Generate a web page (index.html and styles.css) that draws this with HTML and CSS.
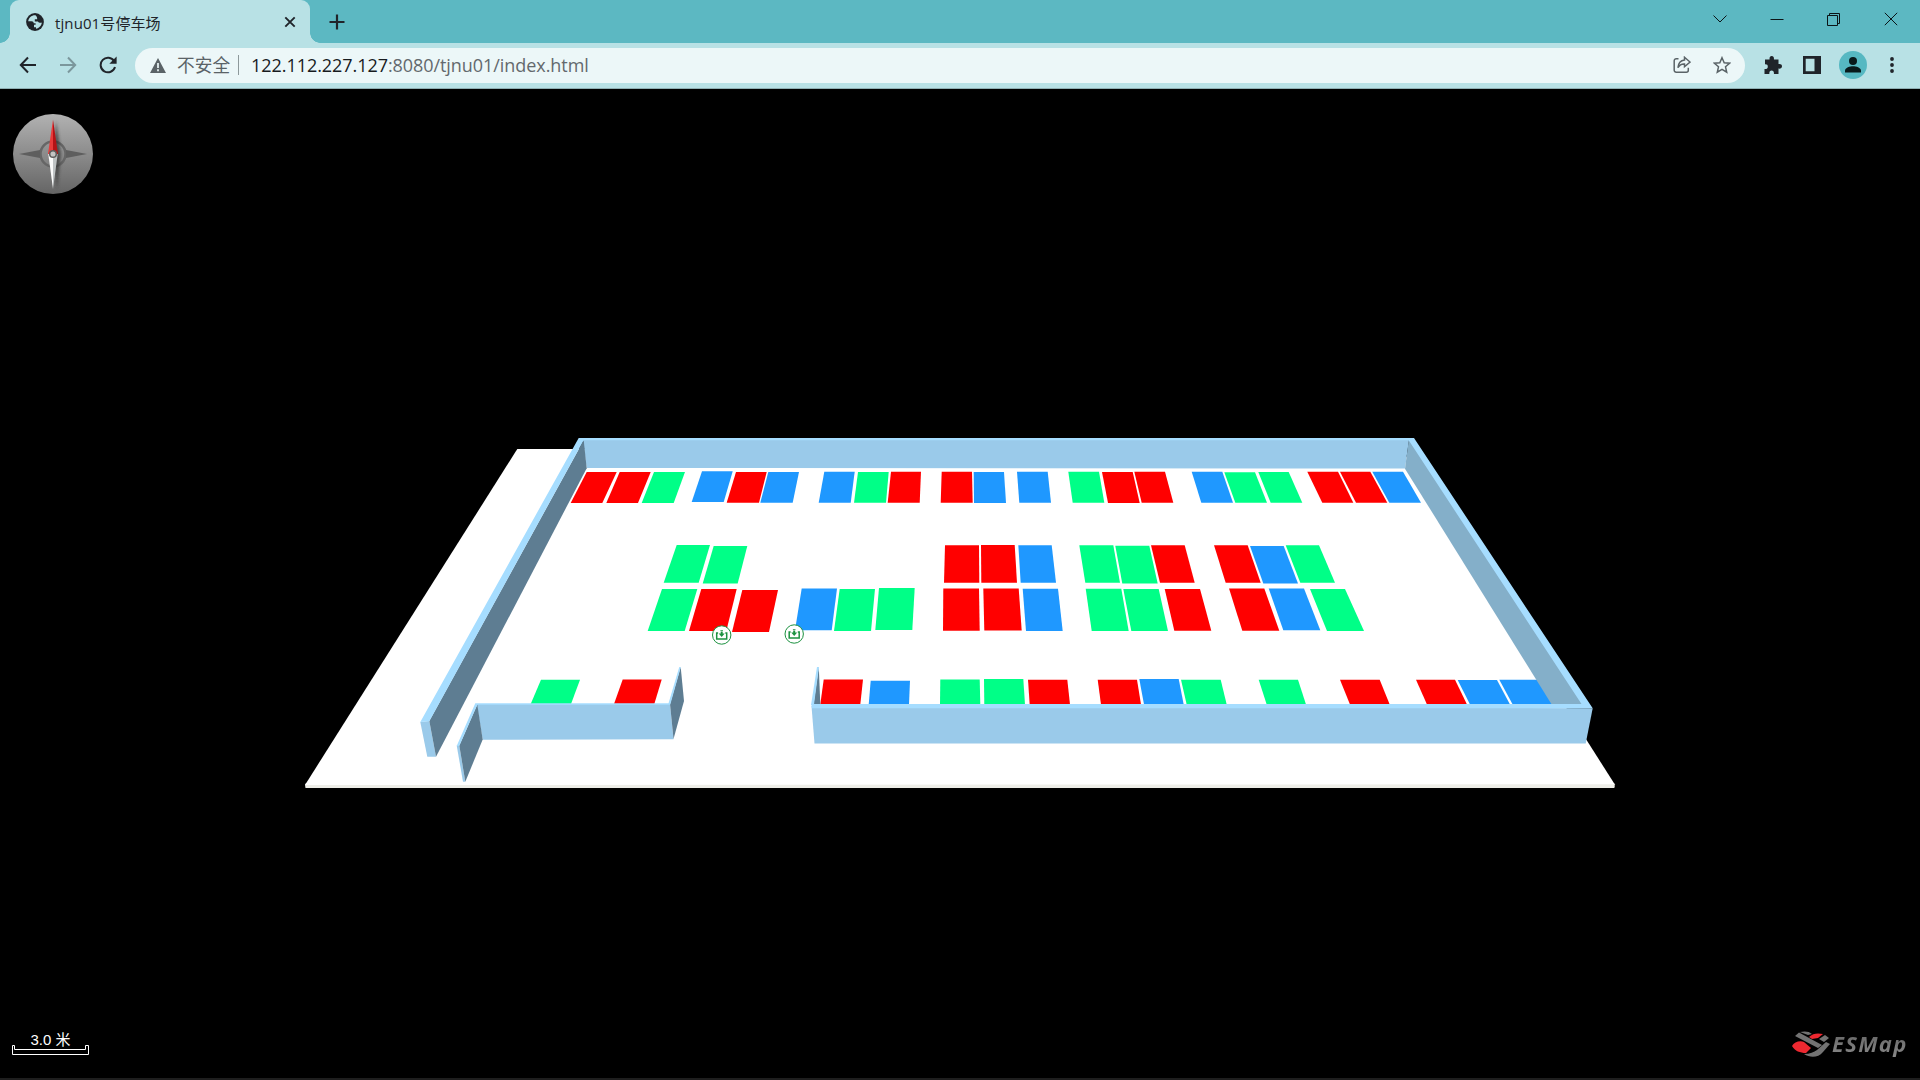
FILE: index.html
```html
<!DOCTYPE html>
<html lang="zh-CN">
<head>
<meta charset="utf-8">
<title>tjnu01号停车场</title>
<link rel="stylesheet" href="styles.css">
</head>
<body>
<header class="tabstrip">
  <div class="tab">
    <svg class="globe" width="18" height="18" viewBox="0 0 18 18"><circle cx="9" cy="9" r="8.900" fill="#20242a"/><path d="M9.500 2.200C5.500 2 2.500 4.800 2.200 8.300h3.300c1.600 0 2.200.8 2.200 2h1.900v1.500H8v2.500h2v1.500c3.200-.5 5.500-3 5.800-6.200-1.500.4-3.100.2-3.800-1.200H8.800V6.200h2.400c0-1.700-.2-2.600-1.700-4z" fill="#b8e1e5"/></svg>
    <span class="tab-title">tjnu01号停车场</span>
    <svg class="tab-close" width="12" height="12" viewBox="0 0 12 12"><path d="M1.300 1.300l9.400 9.400M10.700 1.300l-9.400 9.400" stroke="#20242a" stroke-width="1.900"/></svg>
  </div>
  <svg class="new-tab" width="16" height="16" viewBox="0 0 16 16"><path d="M8 .5v15M.5 8h15" stroke="#20242a" stroke-width="2.200"/></svg>
  <div class="window-controls">
    <svg width="14" height="14" viewBox="0 0 14 14"><path d="M.5 3.500L7 10l6.500-6.500"/></svg>
    <svg width="14" height="14" viewBox="0 0 14 14"><path d="M.5 7.500h13"/></svg>
    <svg width="14" height="14" viewBox="0 0 14 14"><path d="M.5 3.500h10v10H.5zM2.500 3.500v-2h10v10h-2"/></svg>
    <svg width="14" height="14" viewBox="0 0 14 14"><path d="M.8.800l12.400 12.400M13.200.800L.8 13.200"/></svg>
  </div>
</header>
<nav class="toolbar">
  <svg class="nav-icon" width="18" height="18" viewBox="0 0 18 18"><path d="M17 9H2M9 1.500L1.800 9 9 16.500" stroke="#20242a"/></svg>
  <svg class="nav-icon" width="18" height="18" viewBox="0 0 18 18"><path d="M1 9h15M9 1.500L16.200 9 9 16.500" stroke="#7b979c"/></svg>
  <svg class="nav-icon" width="18" height="18" viewBox="0 0 18 18"><path d="M15.200 5.200A7.300 7.300 0 1 0 16 11" stroke="#20242a"/><path d="M17.600.5v7.300h-7.300z" fill="#20242a"/></svg>
  <div class="omnibox">
    <svg width="16" height="15" viewBox="0 0 16 15"><path d="M8 0l8 15H0z" fill="#5a6367"/><path d="M8 5v5M8 11.200v2" stroke="#ecf7f8" stroke-width="1.700"/></svg>
    <span class="insecure">不安全</span>
    <i class="divider"></i>
    <span class="url"><b>122.112.227.127</b>:8080/tjnu01/index.html</span>
    <svg class="share" width="18" height="18" viewBox="0 0 18 18"><path d="M5.500 2.700H3.200a2 2 0 0 0-2 2v9.500a2 2 0 0 0 2 2h10.100a2 2 0 0 0 2-2v-2.500M11.500 1.200L17 6l-5.500 4.700V7.900C8.500 7.700 6.500 8.900 4.900 11.700 5.300 7.200 7.600 4.500 11.500 4z"/></svg>
    <svg class="star" width="18" height="18" viewBox="0 0 18 18"><path d="M9 1.700l2.200 5 5.400.5-4.100 3.600 1.200 5.400L9 13.300l-4.700 2.900 1.200-5.400-4.100-3.600 5.400-.5z"/></svg>
  </div>
  <div class="actions">
    <svg width="18" height="18" viewBox="0 0 18 18"><path d="M1 3.500h4.600C5.300 1.500 6 0 7.700 0s2.500 1.500 2.200 3.500h4.600v4.600C16.500 7.700 18 8.500 18 10.300s-1.500 2.600-3.500 2.300V18h-4.600c.3-2.100-.6-3.400-2.300-3.400S5.100 15.900 5.400 18H.5v-5c2.100.3 3.300-.7 3.300-2.300S2.900 8.200 1 8.400z" fill="#20242a"/></svg>
    <svg width="18" height="18" viewBox="0 0 18 18"><path fill-rule="evenodd" d="M0 0h18v18H0zM2.700 2.700v12.600h8.800V2.700z" fill="#20242a"/></svg>
    <svg width="28" height="28" viewBox="0 0 28 28"><circle cx="14" cy="14" r="14" fill="#56b8c2"/><circle cx="14" cy="10" r="4" fill="#08191b"/><path d="M6 21.500v-2c0-2.800 5-4.300 8-4.300s8 1.500 8 4.300v2z" fill="#08191b"/></svg>
    <svg width="4" height="18" viewBox="0 0 4 18"><path d="M2 3h.01M2 9h.01M2 15h.01" stroke="#20242a" stroke-width="3.800" stroke-linecap="round"/></svg>
  </div>
</nav>
<main class="map">
  <svg class="scene" width="1920" height="991" viewBox="0 89 1920 991">
    <path class="base-edge" d="M306 783H1613.800L1614.700 784.300V787.300L1614 788H305.500L305 785z"/>
    <path class="floor" d="M517.300 449H1401.600L1614.700 784.300 305 785z"/>
    <g class="taken">
      <path d="M586.700 472h30L602.300 503h-31.600z"/><path d="M619.700 472h31L638 503h-31.700z"/>
      <path d="M736 472h30.700L759 502.700h-32.300z"/><path d="M891 471.700h30L919.700 502.700h-32z"/>
      <path d="M941.700 471.700H972L972.700 502.700h-32z"/><path d="M1102 472h30.700L1139.700 503H1108z"/>
      <path d="M1134.300 471.700H1165L1173.300 502.700h-31.600z"/><path d="M1307.300 471.700H1338L1353.300 502.700h-31z"/>
      <path d="M1340 471.700h30.300L1387.300 502.700H1356z"/>
      <path d="M945 545.300h34L979.300 582.700H944z"/><path d="M981 545h33.700L1017 582.700H981.300z"/>
      <path d="M1151 545.300h33.700L1194.700 582.700H1160z"/><path d="M1214 545.300h33.700L1260.700 582.700h-35z"/>
      <path d="M701.300 589h35.400L726.300 631H689z"/><path d="M742.300 590H778L769 632H732z"/>
      <path d="M943.300 588.500H979L979.700 630.700H943z"/><path d="M983.300 588.500h35.400L1021.700 630.500h-37.400z"/>
      <path d="M1164.700 589H1200L1211.300 630.700h-37z"/><path d="M1229 588.500h35.300L1279.300 630.700h-37z"/>
      <path d="M622.700 679.500h39L654.300 704H614z"/><path d="M823.700 679.500H863L860.300 704.500h-40z"/>
      <path d="M1028 679.700h39.300L1070 704.500h-40.300z"/><path d="M1097.700 679.700H1137L1141 704.500h-40z"/>
      <path d="M1340 679.700h39.700L1389.700 704.500H1350z"/><path d="M1416 679.700h39L1467 704.500h-40z"/>
    </g>
    <g class="free">
      <path d="M654 472h31L673.700 503h-32z"/><path d="M858 472h30.700L886 502.700h-32z"/>
      <path d="M1068.300 471.700H1099L1104.300 502.700h-31.600z"/><path d="M1224.300 472.300H1255L1267 502.700h-31.700z"/>
      <path d="M1258.300 472h30.400L1302.300 502.700h-31.600z"/>
      <path d="M676.700 545H710L698.700 582.700h-35z"/><path d="M713.700 546h33.600L737.700 583.500h-35z"/>
      <path d="M1079.300 545.300h34L1120 582.700h-34.700z"/><path d="M1115.300 545.700h34L1157.700 583.500h-35.400z"/>
      <path d="M1285.700 545.300H1319L1335 582.700h-34.700z"/>
      <path d="M662 589h35.300L684.700 631h-37z"/><path d="M839.700 589H875L871 631h-37z"/>
      <path d="M879 588h35.700L912.300 630h-37z"/><path d="M1085.700 588.700h35.600L1128.700 631h-37z"/>
      <path d="M1123.300 589h35.400L1168 631h-36.700z"/><path d="M1310 589h35L1364 631h-37z"/>
      <path d="M541 679.700h39L571 704h-40.300z"/><path d="M940.300 679.500h39.400L980.300 704.500H940z"/>
      <path d="M984 679h39.300L1025 704.500h-40.700z"/><path d="M1181 679.700h39.700L1226.700 704.500h-40z"/>
      <path d="M1258.700 679.700H1298L1306 704.500h-39.300z"/>
    </g>
    <g class="reserved">
      <path d="M702 471.300h30.700L723.700 502h-32z"/><path d="M768.300 472H799L792.700 502.700h-32.400z"/>
      <path d="M824.300 471.700h30.400L850.700 502.700h-32z"/><path d="M973.700 472H1004L1006 503H974z"/>
      <path d="M1017 471.700h30.700L1051 502.700h-31.700z"/><path d="M1191.700 471.700h30.600L1233 502.700h-31.700z"/>
      <path d="M1372.300 471.700H1403L1421 502.700h-31.700z"/>
      <path d="M1018.300 545.300h33.400L1056 582.700h-35.300z"/><path d="M1250 546h33.700L1298 583.500h-34.700z"/>
      <path d="M801.700 588.500H837L831.700 630.300H795z"/><path d="M1022.700 588.700H1058L1062.700 631H1026z"/>
      <path d="M1268.700 588.500H1304L1320.300 630.300h-37z"/>
      <path d="M870.700 680.700H910L909 704.500h-40.300z"/><path d="M1139.300 679h39.400L1183.700 704.500H1144z"/>
      <path d="M1457.700 680H1497L1510 704.500h-40z"/><path d="M1499.300 679.700h39.400L1552.700 704.500h-40z"/>
    </g>
    <g class="wall-face">
      <path d="M583 440H1409L1405 468.500 586.700 468z"/>
      <path d="M420.300 722l9-1L436 756.700h-8.700z"/>
      <path d="M456.700 745.500h2.600L465.300 781.700H463z"/>
      <path d="M476.700 704H670L673.500 739.300 482.700 739.700z"/>
      <path d="M811.500 706L1592.700 708.300 1585.700 743.500H814.500z"/>
    </g>
    <g class="wall-dark">
      <path d="M583.700 440.300L586.700 468.300 436 756.700 429.300 721z"/>
      <path d="M477.300 704.500L482.700 739.500 465.300 781.700 459.300 745.500z"/>
      <path d="M680.700 667L684 701 673.500 739 670 704z"/>
      <path d="M818.800 667L820.300 704.500H813.500z"/>
    </g>
    <path class="wall-mid" d="M1408.700 440.700L1405 468.700 1551.700 704.500 1553 706H1586L1411 439.500z"/>
    <g class="wall-top">
      <path d="M578.700 438H1414V440.300H583.700L429.300 721.300 420.300 722z"/>
      <path d="M1413 438H1414L1592.700 708.300H812L811.300 704H1581.500L1408.700 440.300z"/>
      <path d="M475.300 703.300H670V704.800H477.300L459.300 746H456.700z"/>
      <path d="M679.300 667h1.500L670.300 704.500 668.300 704z"/>
      <path d="M817 667h2L814 704.500 811 705z"/>
    </g>
    <g class="gate" transform="translate(721.700 635)"><circle r="9.200"/><path class="tray" d="M-3.600-2H-5V4H5V-2H3.600"/><path class="arrow" d="M-1-3.500H1V-1.500H3L0 2-3-1.500H-1zM-1.300-5h2.600v.7h-2.600z"/></g>
    <g class="gate" transform="translate(794.200 634)"><circle r="9.200"/><path class="tray" d="M-3.600-2H-5V4H5V-2H3.600"/><path class="arrow" d="M-1-3.500H1V-1.500H3L0 2-3-1.500H-1zM-1.300-5h2.600v.7h-2.600z"/></g>
  </svg>
  <svg class="compass" width="82" height="82" viewBox="0 0 82 82">
    <defs>
      <linearGradient id="dial" x1="0" y1="0" x2="0" y2="1"><stop offset="0" stop-color="#b2b2b2"/><stop offset="1" stop-color="#656565"/></linearGradient>
      <filter id="soft" x="-100%" y="-20%" width="300%" height="140%"><feGaussianBlur stdDeviation="1.500"/></filter>
    </defs>
    <circle cx="41" cy="41" r="40" fill="url(#dial)"/>
    <circle cx="41" cy="41" r="12.500" fill="none" stroke="#666" stroke-width="2.500"/>
    <path d="M7 41l21-4v8zM75 41l-21-4v8z" fill="#5e5e5e"/>
    <path d="M44 8l5 33-4 35-4-35z" fill="#333" opacity=".7" filter="url(#soft)"/>
    <path d="M41 6.500l-5 34.500h5z" fill="#e83a3a"/><path d="M41 6.500L46 41h-5z" fill="#b51216"/>
    <path d="M41 76l-4.700-35H41z" fill="#fafafa"/><path d="M41 76l4.700-35H41z" fill="#bfc3c4"/>
    <circle cx="41" cy="41" r="3.300" fill="#c4c4c4" stroke="#5d5d5d" stroke-width="1.500"/>
  </svg>
  <div class="scale">
    <span>3.0 米</span>
    <svg width="79" height="11" viewBox="0 0 79 11"><path d="M1.500.5V9.500H77.500V.5H74.500V4.500H3.500V.500z" fill="#000" stroke="#fff"/></svg>
  </div>
  <div class="brand">
    <svg width="39" height="27" viewBox="0 0 39 27">
      <path d="M0 15C2 11 8 9 12 11l7 6-5 5C8 22 3 20 0 15zM17 6C21 2 26 2 31 3l-5 4-6 1z" fill="#ed2830"/>
      <path d="M3 5L7 1.500 30 14 26 17zM8 1C12 0 17 0 20 3l-4 1zM27 8l6-4 4 3-5 4zM12 23c6 0 10-2 13-4l9-8 4 2-7 8c-5 6-13 6-19 2z" fill="#737373"/>
    </svg>
    <span>ESMap</span>
  </div>
</main>
<footer class="taskbar-edge"></footer>
</body>
</html>
```
FILE: styles.css
```css
* { box-sizing: border-box; }
body {
  margin: 0;
  width: 1920px;
  height: 1080px;
  overflow: hidden;
  display: flex;
  flex-direction: column;
  background: #000;
  font-family: "Open Sans", "Noto Sans CJK SC", sans-serif;
}
svg { display: block; flex: none; }

.tabstrip { height: 43px; flex: none; display: flex; align-items: center; background: #5cb8c2; padding-left: 10px; }
.tab {
  position: relative;
  width: 300px;
  height: 43px;
  padding: 0 14px 0 16px;
  display: flex;
  align-items: center;
  background: #b8e1e5;
  border-radius: 9px 9px 0 0;
}
.tab::before, .tab::after { content: ""; position: absolute; bottom: 0; width: 10px; height: 10px; }
.tab::before { left: -10px; background: radial-gradient(circle at 0 0, transparent 9.500px, #b8e1e5 10px); }
.tab::after { right: -10px; background: radial-gradient(circle at 100% 0, transparent 9.500px, #b8e1e5 10px); }
.tab-title { margin-left: 11px; padding-top: 2px; font-size: 15px; line-height: 20px; color: #20242a; letter-spacing: .1px; white-space: nowrap; }
.tab-close { margin-left: auto; }
.new-tab { margin-left: 19px; }
.window-controls { margin-left: auto; margin-right: 22px; margin-bottom: 6px; display: flex; gap: 43px; }
.window-controls path { fill: none; stroke: #0b1517; stroke-width: 1; }

.toolbar { height: 46px; flex: none; display: flex; align-items: center; background: #b8e1e5; border-bottom: 1px solid #8fafb3; padding: 0 0 1px 19px; }
.nav-icon { margin-right: 22px; }
.nav-icon path { stroke-width: 2; }
.nav-icon path:only-child, .nav-icon path:first-child { fill: none; }
.omnibox { width: 1610px; height: 35px; margin-left: -4px; display: flex; align-items: center; padding: 0 14px 0 15px; border-radius: 18px; background: #ecf7f8; white-space: nowrap; }
.insecure { margin-left: 11px; font-size: 17.700px; line-height: 24px; color: #5a6367; }
.divider { width: 1px; height: 20px; margin: 0 12px 0 8px; background: #8d999b; }
.url { font-size: 18px; line-height: 24px; letter-spacing: -.06px; color: #63696d; }
.url b { font-weight: 400; color: #171b1e; }
.share { margin-left: auto; }
.star { margin-left: 22px; }
.omnibox .share path, .omnibox .star path { fill: none; stroke: #5a6367; stroke-width: 1.500; }
.actions { display: flex; align-items: center; margin-left: 19px; }
.actions svg:nth-child(2) { margin-left: 21px; }
.actions svg:nth-child(3) { margin-left: 18px; }
.actions svg:nth-child(4) { margin-left: 23px; }

.map { position: relative; flex: none; height: 989px; overflow: hidden; }
.base-edge { fill: #eeeee8; }
.floor { fill: #fff; }
.taken { fill: #f00; }
.free { fill: #00ff87; }
.reserved { fill: #1f98ff; }
.wall-face { fill: #9acaea; }
.wall-dark { fill: #5e7d92; }
.wall-mid { fill: #84afc9; }
.wall-top { fill: #a6ddff; }
.gate circle { fill: #fff; stroke: #1c9240; stroke-width: 1; }
.gate .tray { fill: none; stroke: #1c9240; stroke-width: 1.500; }
.gate .arrow { fill: #1c9240; }
.compass { position: absolute; left: 11.500px; top: 24px; }
.scale { position: absolute; left: 11px; bottom: 22px; width: 79px; color: #fff; font: 15px/20px "Liberation Sans", "Noto Sans CJK SC", sans-serif; text-align: center; }
.scale svg { margin-top: -5px; }
.brand { position: absolute; left: 1792px; bottom: 20px; display: flex; align-items: center; gap: 1px; }
.brand span {
  margin-top: -3px;
  padding-right: 3px;
  font: italic 700 22px/30px "Open Sans", sans-serif;
  letter-spacing: 1.300px;
  color: transparent;
  background: linear-gradient(#5e5e5e, #8a8a8a);
  background-clip: text;
  -webkit-background-clip: text;
}
.taskbar-edge { height: 2px; flex: none; background: #1e1e1e; }
```
